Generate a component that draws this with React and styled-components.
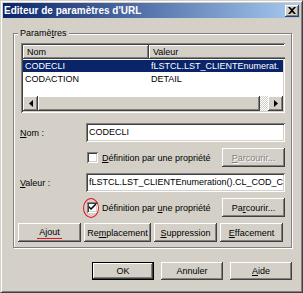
import React from 'react';
import styled, { createGlobalStyle } from 'styled-components';

const GlobalStyle = createGlobalStyle`
  html, body {
    margin: 0;
    padding: 0;
    background: #d4d0c8;
  }
  body {
    font-family: "Liberation Sans", Arial, sans-serif;
    font-size: 9px;
    color: #000;
  }
`;

const raised = `
  box-shadow: inset -1px -1px 0 #404040, inset 1px 1px 0 #fff,
    inset -2px -2px 0 #808080, inset 2px 2px 0 #d4d0c8;
`;

const sunken = `
  box-shadow: inset 1px 1px 0 #808080, inset -1px -1px 0 #fff,
    inset 2px 2px 0 #404040, inset -2px -2px 0 #d4d0c8;
`;

const Window = styled.div`
  width: 303px;
  height: 293px;
  box-sizing: border-box;
  background: #d4d0c8;
  border: 1px solid;
  border-color: #d4d0c8 #404040 #404040 #d4d0c8;
  box-shadow: inset 1px 1px 0 #fff, inset -1px -1px 0 #808080;
  padding: 2px;
  display: flex;
  flex-direction: column;
`;

const TitleBar = styled.div`
  height: 15px;
  display: flex;
  align-items: center;
  justify-content: space-between;
  padding-left: 1px;
  background: linear-gradient(to right, #0a246a, #a6caf0);
`;

const Title = styled.span`
  color: #fff;
  font-weight: bold;
  font-size: 10px;
`;

const CloseButton = styled.div`
  width: 14px;
  height: 12px;
  margin-right: 1px;
  background: #d4d0c8;
  display: flex;
  align-items: center;
  justify-content: center;
  box-sizing: border-box;
  box-shadow: inset -1px -1px 0 #404040, inset 1px 1px 0 #fff,
    inset -2px -2px 0 #808080;
`;

const Body = styled.div`
  flex: 1;
  padding: 10px 8px 0 10px;
  display: flex;
  flex-direction: column;
`;

const GroupBox = styled.fieldset`
  margin: 0;
  padding: 4px 6px 5px 7px;
  border: 1px solid #808080;
  box-shadow: 1px 1px 0 #fff, inset 1px 1px 0 #fff;
  min-width: 0;
`;

const Legend = styled.legend`
  padding: 0 2px;
  margin-left: -3px;
  line-height: 11px;
  background: #d4d0c8;
`;

const U = styled.span`
  text-decoration: underline;
`;

const ListView = styled.div`
  height: 70px;
  box-sizing: border-box;
  padding: 2px;
  background: #fff;
  display: flex;
  flex-direction: column;
  overflow: hidden;
  ${sunken}
`;

const HeaderRow = styled.div`
  display: flex;
  height: 14px;
  flex-shrink: 0;
`;

const HeaderCell = styled.div`
  width: ${p => p.$w}px;
  flex-shrink: 0;
  box-sizing: border-box;
  padding-left: 4px;
  line-height: 14px;
  background: #d4d0c8;
  ${raised}
`;

const Rows = styled.div`
  flex: 1;
  padding-top: 1px;
`;

const Row = styled.div`
  display: flex;
  height: 12px;
  line-height: 12px;
  margin-bottom: 1px;
  background: ${p => (p.$selected ? '#0a246a' : 'transparent')};
  color: ${p => (p.$selected ? '#fff' : '#000')};
`;

const Cell = styled.div`
  width: ${p => p.$w}px;
  flex-shrink: 0;
  padding-left: 2px;
  white-space: nowrap;
  overflow: hidden;
  box-sizing: border-box;
`;

const ScrollBar = styled.div`
  height: 15px;
  flex-shrink: 0;
  display: flex;
`;

const ScrollArrow = styled.div`
  width: 15px;
  background: #d4d0c8;
  display: flex;
  align-items: center;
  justify-content: center;
  ${raised}
`;

const ScrollThumb = styled.div`
  width: 222px;
  background: #d4d0c8;
  ${raised}
`;

const ScrollTrack = styled.div`
  flex: 1;
  background-color: #fff;
  background-image: repeating-conic-gradient(#d4d0c8 0 25%, #fff 0 50%);
  background-size: 2px 2px;
`;

const Form = styled.div`
  display: grid;
  grid-template-columns: 65px 1fr;
  grid-auto-rows: 19px;
  row-gap: 6px;
  margin-top: 10px;
  align-items: center;
`;

const Label = styled.div`
  margin-left: -1px;
`;

const TextInput = styled.div`
  height: 19px;
  box-sizing: border-box;
  padding-left: 3px;
  background: #fff;
  line-height: 19px;
  white-space: nowrap;
  overflow: hidden;
  ${sunken}
`;

const CheckRow = styled.div`
  grid-column: 2;
  display: flex;
  align-items: center;
  height: 19px;
`;

const CheckWrap = styled.div`
  position: relative;
  margin-left: 1px;
  margin-right: 4px;
`;

const CheckBox = styled.div`
  width: 11px;
  height: 11px;
  box-sizing: border-box;
  background: #fff;
  display: flex;
  align-items: center;
  justify-content: center;
  ${sunken}
`;

const RedCircle = styled.div`
  position: absolute;
  left: -4px;
  top: -4px;
  width: 16px;
  height: 20px;
  box-sizing: border-box;
  border: 1.5px solid #e0141e;
  border-radius: 50%;
`;

const CheckText = styled.span`
  flex: 1;
`;

const Button = styled.div`
  width: ${p => p.$w || 63}px;
  height: ${p => p.$h || 19}px;
  box-sizing: border-box;
  display: flex;
  align-items: center;
  justify-content: center;
  background: #d4d0c8;
  color: ${p => (p.$disabled ? '#808080' : '#000')};
  text-shadow: ${p => (p.$disabled ? '1px 1px 0 #fff' : 'none')};
  border: ${p => (p.$default ? '1px solid #000' : 'none')};
  ${raised}
`;

const ActionRow = styled.div`
  grid-column: 1 / span 2;
  display: grid;
  grid-template-columns: 63px 67px 63px 63px;
  column-gap: 3px;
  margin-left: -3px;
`;

const RedMark = styled.span`
  border-bottom: 1.5px solid #e0141e;
  padding: 0 2px 1px;
`;

const Footer = styled.div`
  display: flex;
  justify-content: flex-end;
  gap: 7px;
  margin-top: 14px;
`;

export default function App() {
  return (
    <>
      <GlobalStyle />
      <Window>
        <TitleBar>
          <Title>Editeur de paramètres d'URL</Title>
          <CloseButton>
            <svg width="8" height="7" viewBox="0 0 8 7">
              <path d="M0 0 L2 0 L4 2 L6 0 L8 0 L5 3.5 L8 7 L6 7 L4 5 L2 7 L0 7 L3 3.5 Z" fill="#000" />
            </svg>
          </CloseButton>
        </TitleBar>
        <Body>
          <GroupBox>
            <Legend>Paramè<U>t</U>res</Legend>
            <ListView>
              <HeaderRow>
                <HeaderCell $w={126}>Nom</HeaderCell>
                <HeaderCell $w={140}>Valeur</HeaderCell>
              </HeaderRow>
              <Rows>
                <Row $selected>
                  <Cell $w={126}>CODECLI</Cell>
                  <Cell $w={134}>fLSTCL.LST_CLIENTEnumerat.</Cell>
                </Row>
                <Row>
                  <Cell $w={126}>CODACTION</Cell>
                  <Cell $w={134}>DETAIL</Cell>
                </Row>
              </Rows>
              <ScrollBar>
                <ScrollArrow>
                  <svg width="4" height="7" viewBox="0 0 4 7"><path d="M4 0 L0 3.5 L4 7 Z" fill="#000" /></svg>
                </ScrollArrow>
                <ScrollThumb />
                <ScrollTrack />
                <ScrollArrow>
                  <svg width="4" height="7" viewBox="0 0 4 7"><path d="M0 0 L4 3.5 L0 7 Z" fill="#000" /></svg>
                </ScrollArrow>
              </ScrollBar>
            </ListView>
            <Form>
              <Label><U>N</U>om :</Label>
              <TextInput>CODECLI</TextInput>
              <CheckRow>
                <CheckWrap><CheckBox /></CheckWrap>
                <CheckText><U>D</U>éfinition par une propriété</CheckText>
                <Button $disabled><U>P</U>arcourir...</Button>
              </CheckRow>
              <Label><U>V</U>aleur :</Label>
              <TextInput>fLSTCL.LST_CLIENTEnumeration().CL_COD_C</TextInput>
              <CheckRow>
                <CheckWrap>
                  <CheckBox>
                    <svg width="7" height="7" viewBox="0 0 7 7">
                      <path d="M0 2 L0 4 L2 6 L7 1 L7 -1 L2 4 Z" fill="#000" />
                    </svg>
                  </CheckBox>
                  <RedCircle />
                </CheckWrap>
                <CheckText>Définition par <U>u</U>ne propriété</CheckText>
                <Button>Pa<U>r</U>courir...</Button>
              </CheckRow>
              <ActionRow>
                <Button><RedMark>A<U>j</U>out</RedMark></Button>
                <Button $w={67}>Re<U>m</U>placement</Button>
                <Button><U>S</U>uppression</Button>
                <Button><U>E</U>ffacement</Button>
              </ActionRow>
            </Form>
          </GroupBox>
          <Footer>
            <Button $default $w={62} $h={18}>OK</Button>
            <Button $w={62} $h={18}>Annuler</Button>
            <Button $w={62} $h={18}><U>A</U>ide</Button>
          </Footer>
        </Body>
      </Window>
    </>
  );
}
